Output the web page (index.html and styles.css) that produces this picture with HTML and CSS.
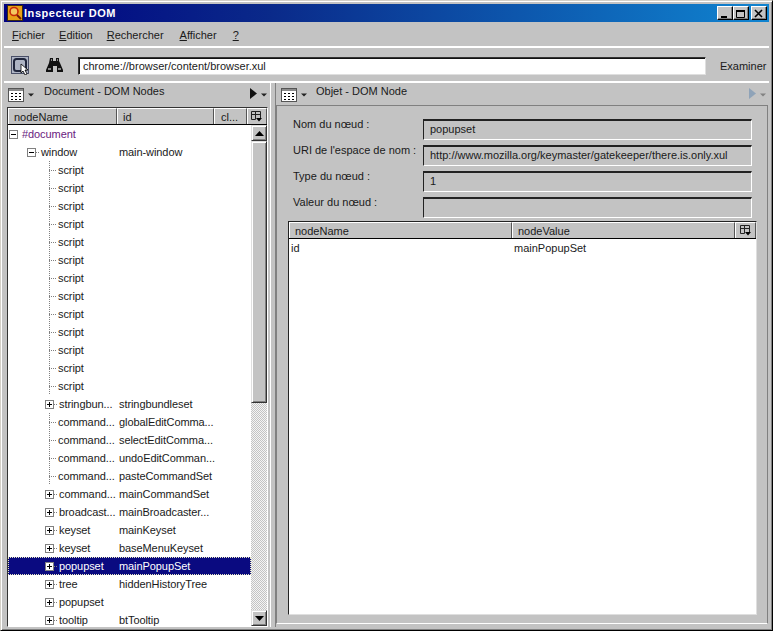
FILE: index.html
```html
<!DOCTYPE html>
<html lang="fr">
<head>
<meta charset="utf-8">
<title>Inspecteur DOM</title>
<link rel="stylesheet" href="styles.css">
</head>
<body>
<svg class="defs" width="0" height="0" aria-hidden="true">
  <symbol id="grid" viewBox="0 0 16 14">
    <rect x=".5" y=".5" width="15" height="13" fill="#fff" stroke="#555"/>
    <rect x="1" y="1" width="14" height="2" fill="#8a8a8a"/>
    <path d="M3 5h2v1H3zM7 5h2v1H7zM11 5h2v1h-2zM3 8h2v1H3zM7 8h2v1H7zM11 8h2v1h-2zM3 11h2v1H3zM7 11h2v1H7zM11 11h2v1h-2z" fill="#000"/>
  </symbol>
  <symbol id="caret" viewBox="0 0 6 4"><path d="M0 0.5h6L3 3.5z" fill="#222"/></symbol>
  <symbol id="picker" viewBox="0 0 11 11">
    <path d="M.5.5h9v7M.5.5v8h4M.5 3.5h9M4.5.5v8" fill="none" stroke="#222"/>
    <path d="M5 7h6L8 10.500z" fill="#000"/>
  </symbol>
</svg>
<div class="window">
  <header class="titlebar">
    <svg class="logo" width="16" height="16" viewBox="0 0 16 16">
      <rect width="16" height="16" fill="#e8a018"/>
      <rect x=".5" y=".5" width="15" height="15" fill="none" stroke="#3a2a10"/>
      <circle cx="7" cy="6.500" r="4" fill="#f4c860" stroke="#c82808" stroke-width="1.600"/>
      <path d="M10 10l4 4" stroke="#7a1808" stroke-width="2"/>
    </svg>
    <span class="title-text">Inspecteur DOM</span>
    <div class="caption">
      <button class="cap-btn"><svg width="10" height="10" viewBox="0 0 10 10"><path d="M1 7h6v2H1z" fill="#000"/></svg></button>
      <button class="cap-btn"><svg width="10" height="10" viewBox="0 0 10 10"><path d="M.5 1.500h8v7h-8z" fill="none" stroke="#000"/><path d="M0 1h9v2H0z" fill="#000"/></svg></button>
      <button class="cap-btn cap-close"><svg width="10" height="10" viewBox="0 0 10 10"><path d="M1 1l7 7M8 1L1 8" stroke="#000" stroke-width="1.600"/></svg></button>
    </div>
  </header>

  <nav class="menubar">
    <span class="menu"><u>F</u>ichier</span>
    <span class="menu"><u>E</u>dition</span>
    <span class="menu"><u>R</u>echercher</span>
    <span class="menu"><u>A</u>fficher</span>
    <span class="menu"><u>?</u></span>
  </nav>

  <div class="toolbar">
    <span class="inspect-btn">
      <svg width="18" height="19" viewBox="0 0 18 19">
        <rect x=".5" y=".5" width="17" height="17" fill="#aeb4c4" stroke="#4a5068"/>
        <rect x="3" y="3" width="12" height="12" rx="2.500" fill="none" stroke="#20263c" stroke-width="2"/>
        <path d="M10 8v9l2-2 2 4 2-1-2-4h3z" fill="#fff" stroke="#000" stroke-width=".8"/>
      </svg>
    </span>
    <svg class="binoculars" width="17" height="14" viewBox="0 0 17 14">
      <path d="M4 0h3v3h3V0h3v3l1 2 3 7v2h-6V8H7v6H0v-2l3-7z" fill="#111"/>
      <path d="M2 11h3M12 11h3M5 2h1M11 2h1" stroke="#fff" stroke-width="1"/>
    </svg>
    <div class="address">chrome://browser/content/browser.xul</div>
    <span class="examine">Examiner</span>
  </div>

  <main class="panes">
    <section class="pane-left">
      <div class="pane-head">
        <svg class="grid-icon" width="16" height="14"><use href="#grid"/></svg>
        <svg class="caret" width="6" height="4"><use href="#caret"/></svg>
        <span class="pane-title">Document - DOM Nodes</span>
        <span class="pane-nav">
          <svg width="7" height="11" viewBox="0 0 7 11"><path d="M0 0l7 5.500L0 11z" fill="#111"/></svg>
          <svg class="caret" width="6" height="4"><use href="#caret"/></svg>
        </span>
      </div>
      <div class="tree">
        <div class="tree-head">
          <div class="th th-name">nodeName</div>
          <div class="th th-id">id</div>
          <div class="th th-class">cl...</div>
          <div class="th th-pick"><svg width="11" height="11"><use href="#picker"/></svg></div>
        </div>
        <div class="tree-body">
          <div class="rows">
            <div class="row d0"><span class="name"><span class="tw minus"></span><span class="doc">#document</span></span></div>
            <div class="row d1"><span class="name"><span class="tw minus"></span><span class="dash"></span>window</span><span>main-window</span></div>
            <div class="row d2"><span class="name"><span class="leaf"></span>script</span></div>
            <div class="row d2"><span class="name"><span class="leaf"></span>script</span></div>
            <div class="row d2"><span class="name"><span class="leaf"></span>script</span></div>
            <div class="row d2"><span class="name"><span class="leaf"></span>script</span></div>
            <div class="row d2"><span class="name"><span class="leaf"></span>script</span></div>
            <div class="row d2"><span class="name"><span class="leaf"></span>script</span></div>
            <div class="row d2"><span class="name"><span class="leaf"></span>script</span></div>
            <div class="row d2"><span class="name"><span class="leaf"></span>script</span></div>
            <div class="row d2"><span class="name"><span class="leaf"></span>script</span></div>
            <div class="row d2"><span class="name"><span class="leaf"></span>script</span></div>
            <div class="row d2"><span class="name"><span class="leaf"></span>script</span></div>
            <div class="row d2"><span class="name"><span class="leaf"></span>script</span></div>
            <div class="row d2"><span class="name"><span class="leaf"></span>script</span></div>
            <div class="row d2"><span class="name"><span class="tw plus"></span><span class="dash"></span>stringbun...</span><span>stringbundleset</span></div>
            <div class="row d2"><span class="name"><span class="leaf"></span>command...</span><span>globalEditComma...</span></div>
            <div class="row d2"><span class="name"><span class="leaf"></span>command...</span><span>selectEditComma...</span></div>
            <div class="row d2"><span class="name"><span class="leaf"></span>command...</span><span>undoEditComman...</span></div>
            <div class="row d2"><span class="name"><span class="leaf"></span>command...</span><span>pasteCommandSet</span></div>
            <div class="row d2"><span class="name"><span class="tw plus"></span><span class="dash"></span>command...</span><span>mainCommandSet</span></div>
            <div class="row d2"><span class="name"><span class="tw plus"></span><span class="dash"></span>broadcast...</span><span>mainBroadcaster...</span></div>
            <div class="row d2"><span class="name"><span class="tw plus"></span><span class="dash"></span>keyset</span><span>mainKeyset</span></div>
            <div class="row d2"><span class="name"><span class="tw plus"></span><span class="dash"></span>keyset</span><span>baseMenuKeyset</span></div>
            <div class="row d2 selected"><span class="name"><span class="tw plus"></span><span class="dash"></span>popupset</span><span>mainPopupSet</span></div>
            <div class="row d2"><span class="name"><span class="tw plus"></span><span class="dash"></span>tree</span><span>hiddenHistoryTree</span></div>
            <div class="row d2"><span class="name"><span class="tw plus"></span><span class="dash"></span>popupset</span></div>
            <div class="row d2"><span class="name"><span class="tw plus"></span><span class="dash"></span>tooltip</span><span>btTooltip</span></div>
          </div>
          <div class="scrollbar">
            <div class="sb-btn"><svg width="9" height="5" viewBox="0 0 9 5"><path d="M4.500 0L9 5H0z" fill="#000"/></svg></div>
            <div class="sb-thumb"></div>
            <div class="sb-track"></div>
            <div class="sb-btn"><svg width="9" height="5" viewBox="0 0 9 5"><path d="M0 0h9L4.500 5z" fill="#000"/></svg></div>
          </div>
        </div>
      </div>
    </section>

    <div class="splitter"></div>

    <section class="pane-right">
      <div class="pane-head">
        <svg class="grid-icon" width="16" height="14"><use href="#grid"/></svg>
        <svg class="caret" width="6" height="4"><use href="#caret"/></svg>
        <span class="pane-title">Objet - DOM Node</span>
        <span class="pane-nav">
          <svg width="7" height="11" viewBox="0 0 7 11"><path d="M0 0l7 5.500L0 11z" fill="#8fa3b8"/></svg>
          <svg class="caret caret-dim" width="6" height="4"><use href="#caret"/></svg>
        </span>
      </div>
      <div class="object-body">
        <div class="fields">
          <label class="flabel">Nom du nœud :</label><div class="field">popupset</div>
          <label class="flabel">URI de l'espace de nom :</label><div class="field">http://www.mozilla.org/keymaster/gatekeeper/there.is.only.xul</div>
          <label class="flabel">Type du nœud :</label><div class="field">1</div>
          <label class="flabel">Valeur du nœud :</label><div class="field"></div>
        </div>
        <div class="attrs">
          <div class="attr-head">
            <div class="th ah-name">nodeName</div>
            <div class="th ah-value">nodeValue</div>
            <div class="th ah-pick"><svg width="11" height="11"><use href="#picker"/></svg></div>
          </div>
          <div class="attr-row"><span class="attr-name">id</span><span>mainPopupSet</span></div>
        </div>
      </div>
    </section>
  </main>
</div>
</body>
</html>
```

FILE: styles.css
```css
* { box-sizing: border-box; }
html, body { margin: 0; padding: 0; }
body {
  width: 773px;
  height: 631px;
  overflow: hidden;
  font: 11px/18px "Liberation Sans", Arial, sans-serif;
  color: #1a1a1a;
  background: #c3c3c3;
}
.defs { position: absolute; }
svg { display: block; }

.window {
  width: 773px;
  height: 631px;
  display: flex;
  flex-direction: column;
  padding: 3px;
  border: 1px solid;
  border-color: #d4d0c8 #000 #000 #d4d0c8;
  box-shadow: inset 1px 1px #fff, inset -1px -1px #808080;
  background: #c3c3c3;
}

.titlebar {
  height: 18px;
  flex: none;
  display: flex;
  align-items: center;
  padding: 0 2px 0 3px;
  background: linear-gradient(90deg, #000080 0%, #0a2a8a 35%, #1084d0 100%);
  color: #fff;
}
.logo { flex: none; }
.title-text { margin-left: 1px; font-weight: bold; font-size: 11px; letter-spacing: .55px; }
.caption { margin-left: auto; display: flex; }
.cap-btn {
  width: 16px;
  height: 14px;
  padding: 1px 0 0 2px;
  background: #c3c3c3;
  border: 1px solid;
  border-color: #fff #000 #000 #fff;
  box-shadow: inset -1px -1px #808080;
}
.cap-close { margin-left: 2px; }

.menubar {
  height: 26px;
  flex: none;
  display: flex;
  align-items: center;
  gap: 14px;
  padding: 2px 0 0 8px;
  border-bottom: 2px solid #fff;
  border-image: linear-gradient(#808080 50%, #fff 50%) 2;
}
.menu { white-space: nowrap; }
.menu:nth-child(4) { margin-left: 2px; }
.menu:nth-child(5) { margin-left: 2px; }

.toolbar {
  height: 35px;
  flex: none;
  display: flex;
  align-items: center;
  padding: 1px 0 0 7px;
  border-bottom: 2px solid;
  border-image: linear-gradient(#808080 50%, #fff 50%) 2;
}
.inspect-btn { width: 18px; flex: none; }
.binoculars { margin-left: 17px; flex: none; }
.address {
  margin: 2px 0 0 15px;
  width: 628px;
  height: 18px;
  padding-left: 4px;
  line-height: 17px;
  background: #fff;
  border: 1px solid;
  border-color: #333 #dfdfdf #dfdfdf #333;
  box-shadow: inset 1px 1px #111;
  white-space: nowrap;
}
.examine { margin: 2px 0 0 14px; }

.panes { flex: 1; min-height: 0; display: flex; }
.pane-left { width: 266px; flex: none; display: flex; flex-direction: column; }
.splitter {
  width: 6px;
  flex: none;
  border-left: 1px solid #fff;
  border-right: 1px solid #808080;
  background: #c3c3c3;
}
.pane-right { flex: 1; min-width: 0; display: flex; flex-direction: column; }

.pane-head {
  height: 23px;
  flex: none;
  display: flex;
  align-items: flex-start;
  padding: 5px 3px 0 4px;
}
.pane-right .pane-head { padding-left: 5px; }
.caret { margin: 5px 0 0 4px; flex: none; }
.caret-dim { opacity: .4; }
.pane-title { margin: -6px 0 0 10px; white-space: nowrap; }
.pane-right .pane-title { margin-left: 9px; }
.pane-nav { margin-left: auto; display: flex; align-items: flex-start; }

.tree {
  margin: 1px 2px 0 3px;
  height: 520px;
  display: flex;
  flex-direction: column;
  border: 1px solid;
  border-color: #333 #fff #fff #333;
  background: #fff;
}
.tree-head { height: 17px; flex: none; display: flex; border-bottom: 1px solid #000; background: #c3c3c3; }
.th {
  height: 16px;
  line-height: 16px;
  padding-left: 5px;
  background: #c3c3c3;
  border-left: 1px solid #fff;
  border-top: 1px solid #fff;
  border-right: 1px solid #555;
  white-space: nowrap;
}
.th-name { width: 109px; }
.th-id { width: 97px; }
.th-class { width: 33px; padding-left: 6px; }
.th-pick { width: 20px; padding: 2px 0 0 3px; }

.tree-body { flex: 1; min-height: 0; display: flex; }
.rows { width: 243px; flex: none; overflow: hidden; }
.row { height: 18px; display: flex; white-space: nowrap; letter-spacing: -.08px; }
.name { width: 111px; flex: none; display: flex; align-items: center; }
.d0 .name { padding-left: 1px; }
.d1 .name { padding-left: 19px; }
.d2 .name { padding-left: 37px; }
.doc { margin-left: 4px; color: #6a1a80; }

.tw {
  width: 9px;
  height: 9px;
  flex: none;
  border: 1px solid #808080;
  background-color: #fff;
  background-repeat: no-repeat;
  background-position: center;
}
.minus { background-image: linear-gradient(#000, #000); background-size: 5px 1px; }
.plus {
  background-image: linear-gradient(#000, #000), linear-gradient(#000, #000);
  background-size: 5px 1px, 1px 5px;
}
.dash {
  width: 4px;
  height: 1px;
  flex: none;
  margin-right: 1px;
  background: repeating-linear-gradient(90deg, #808080 0 1px, transparent 1px 2px);
}
.leaf {
  width: 13px;
  height: 18px;
  flex: none;
  background:
    repeating-linear-gradient(90deg, #808080 0 1px, transparent 1px 2px) 4px 9px / 8px 1px no-repeat,
    repeating-linear-gradient(#808080 0 1px, transparent 1px 2px) 4px 0 / 1px 18px no-repeat;
}
.selected {
  background: #0a0a80;
  color: #fff;
  outline: 1px dotted #e8e8c0;
  outline-offset: -1px;
}

.scrollbar { width: 16px; flex: none; display: flex; flex-direction: column; }
.sb-btn {
  height: 16px;
  flex: none;
  display: flex;
  align-items: center;
  justify-content: center;
  background: #c3c3c3;
  border: 1px solid;
  border-color: #dfdfdf #333 #333 #dfdfdf;
  box-shadow: inset 1px 1px #fff, inset -1px -1px #808080;
}
.sb-thumb {
  height: 262px;
  flex: none;
  background: #c3c3c3;
  border: 1px solid;
  border-color: #dfdfdf #333 #333 #dfdfdf;
  box-shadow: inset 1px 1px #fff, inset -1px -1px #808080;
}
.sb-track {
  flex: 1;
  background: conic-gradient(#f4f4f4 25%, #c3c3c3 0 50%, #f4f4f4 0 75%, #c3c3c3 0) 0 0 / 2px 2px;
}

.object-body {
  flex: 1;
  min-height: 0;
  display: flex;
  flex-direction: column;
  margin: -1px 1px 3px 0;
  padding: 13px 10px 8px 11px;
  border: 1px solid;
  border-color: #808080 #808080 #fff #808080;
}
.fields {
  margin: 0 5px;
  display: grid;
  grid-template-columns: 130px 1fr;
  grid-auto-rows: 21px;
  row-gap: 5px;
}
.flabel { margin-top: -4px; white-space: nowrap; }
.field {
  padding-left: 6px;
  line-height: 17px;
  border: 1px solid;
  border-color: #222 #fff #fff #222;
  border-top-width: 2px;
  white-space: nowrap;
}
.attrs {
  flex: 1;
  min-height: 0;
  margin-top: 3px;
  border: 1px solid;
  border-color: #222 #dfdfdf #dfdfdf #222;
  background: #fff;
}
.attr-head { height: 17px; display: flex; border-bottom: 1px solid #000; background: #c3c3c3; }
.ah-name { width: 223px; }
.ah-value { width: 223px; }
.ah-pick { width: 21px; padding: 2px 0 0 4px; }
.attr-row { height: 18px; display: flex; padding-left: 2px; white-space: nowrap; }
.attr-name { width: 223px; flex: none; }
```
